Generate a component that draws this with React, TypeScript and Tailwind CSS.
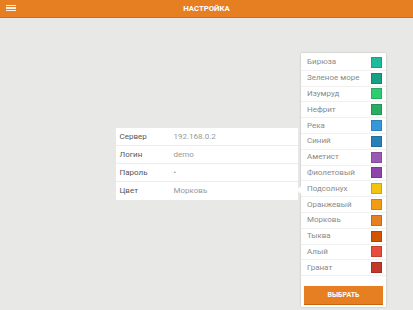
import React from "react";

interface ColorOption {
  name: string;
  hex: string;
}

const colors: ColorOption[] = [
  { name: "Бирюза", hex: "#1abc9c" },
  { name: "Зеленое море", hex: "#16a085" },
  { name: "Изумруд", hex: "#2ecc71" },
  { name: "Нефрит", hex: "#27ae60" },
  { name: "Река", hex: "#3498db" },
  { name: "Синий", hex: "#2980b9" },
  { name: "Аметист", hex: "#9b59b6" },
  { name: "Фиолетовый", hex: "#8e44ad" },
  { name: "Подсолнух", hex: "#f1c40f" },
  { name: "Оранжевый", hex: "#f39c12" },
  { name: "Морковь", hex: "#e67e22" },
  { name: "Тыква", hex: "#d35400" },
  { name: "Алый", hex: "#e74c3c" },
  { name: "Гранат", hex: "#c0392b" },
];

const fields = [
  { label: "Сервер", value: "192.168.0.2" },
  { label: "Логин", value: "demo" },
  { label: "Пароль", value: "•" },
  { label: "Цвет", value: "Морковь" },
];

export default function App() {
  return (
    <div
      className="w-[413px] h-[310px] flex flex-col bg-[#e8e8e6] overflow-hidden"
      style={{ fontFamily: "Roboto, 'Noto Sans', sans-serif" }}
    >
      {/* top bar */}
      <div className="relative h-[18px] shrink-0 bg-[#e67e22] border-b border-[#d06c15] flex items-center justify-center">
        <div className="absolute left-[6px] top-[5px] flex flex-col gap-[1.2px]">
          <span className="block w-[10px] h-[1.3px] bg-white/90" />
          <span className="block w-[10px] h-[1.3px] bg-white/90" />
          <span className="block w-[10px] h-[1.3px] bg-white/90" />
        </div>
        <span className="text-white font-bold text-[7.8px] leading-none">НАСТРОЙКА</span>
      </div>

      {/* content */}
      <div className="relative flex-1 flex items-center justify-center">
        <div className="w-[182px] bg-white">
          {fields.map((f, i) => (
            <div
              key={f.label}
              className={`flex items-center h-[18px] px-[4px] ${i < fields.length - 1 ? "border-b border-[#ececec]" : ""}`}
            >
              <span className="w-[54px] text-[8px] text-[#555]">{f.label}</span>
              <span className="text-[8px] text-[#999]">{f.value}</span>
            </div>
          ))}
        </div>

        {/* colour picker popup */}
        <div className="absolute left-[301px] top-[35px] w-[85px] h-[254px] bg-white shadow-[0_0_2px_rgba(0,0,0,0.25)] rounded-[1px] flex flex-col">
          <div className="absolute -left-[4px] top-[133px] w-0 h-0 border-y-[4px] border-y-transparent border-r-[4px] border-r-white" />
          <div className="flex flex-col mt-[2px]">
            {colors.map((c) => (
              <div
                key={c.name}
                className="flex items-center justify-between h-[15.8px] pl-[6px] pr-[4px] border-b border-[#f0f0f0]"
              >
                <span className="text-[8px] text-[#8a8a8a] leading-none">{c.name}</span>
                <span
                  className="block w-[11px] h-[11px] border border-black/15"
                  style={{ backgroundColor: c.hex }}
                />
              </div>
            ))}
          </div>
          <div className="flex-1" />
          <button className="mx-[3px] mb-[3px] h-[18px] bg-[#e67e22] shadow-[0_1px_0_#c9650f] text-white text-[7px] font-bold">
            ВЫБРАТЬ
          </button>
        </div>
      </div>
    </div>
  );
}
